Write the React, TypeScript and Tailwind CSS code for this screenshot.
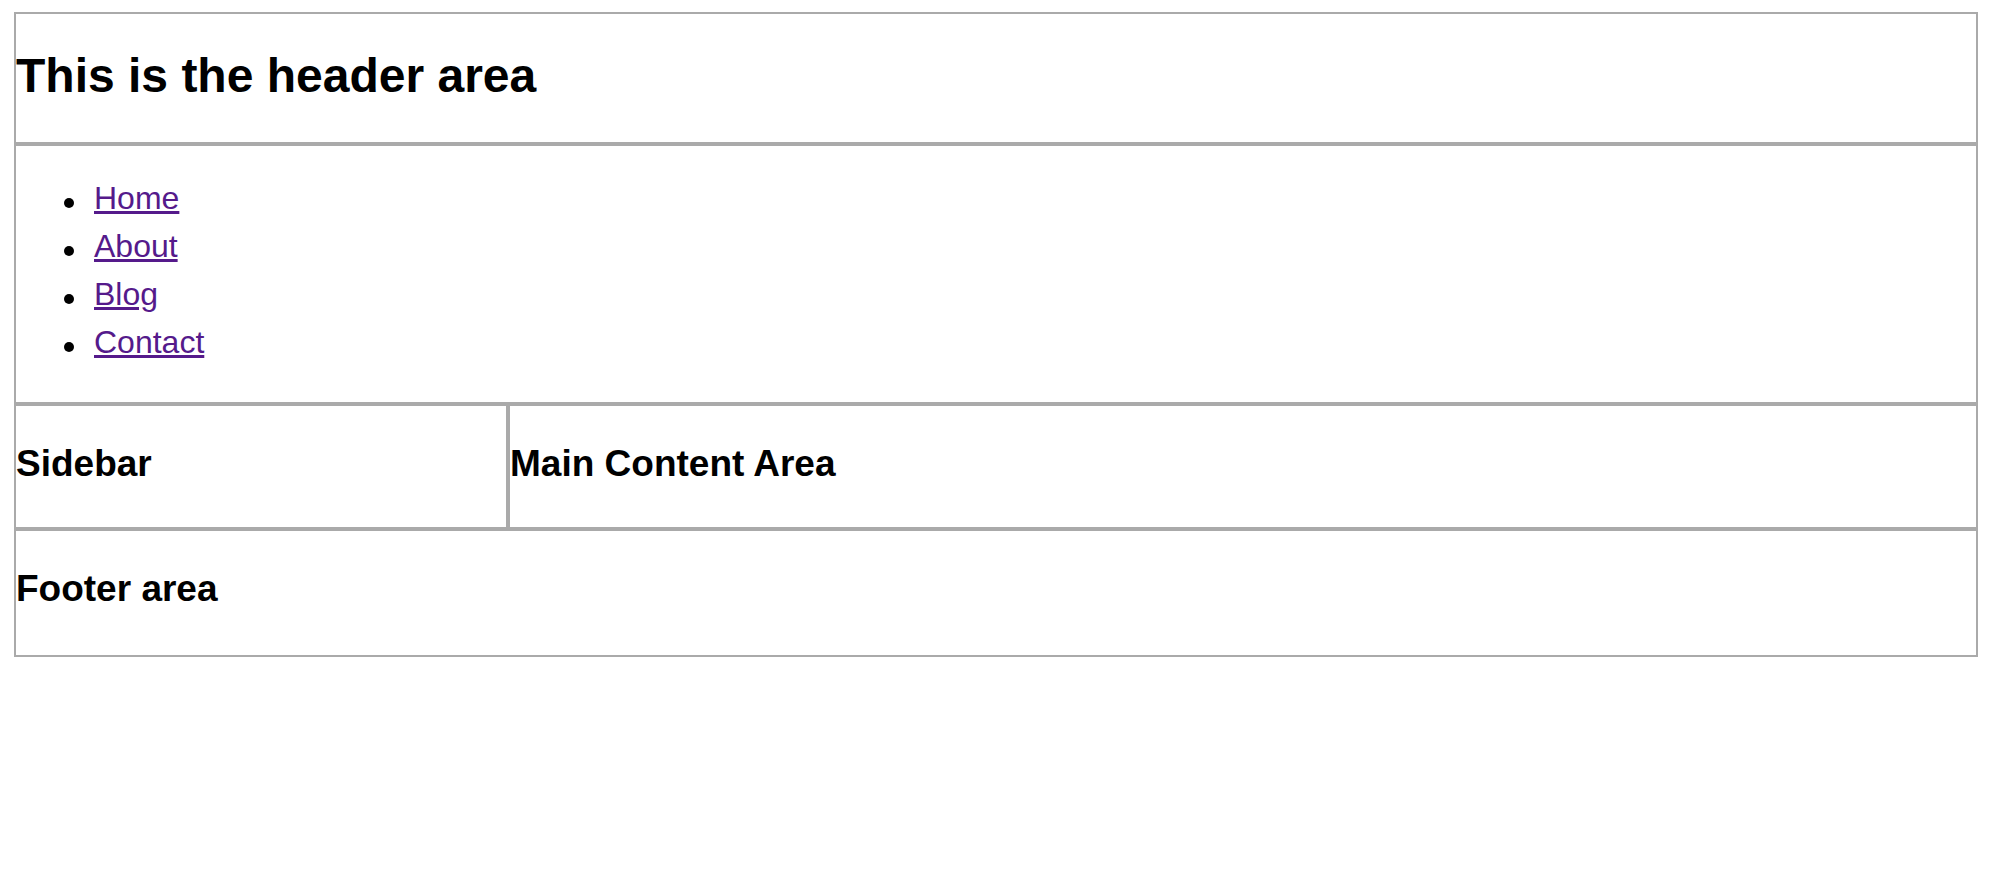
const links = ["Home", "About", "Blog", "Contact"];

export default function App() {
    return (
        <div className="min-h-screen bg-white text-black pt-[12px] pl-[14px]" style={{ fontFamily: '"Liberation Sans", Arial, sans-serif' }}>
            <div className="w-[1964px] flex flex-col">
                <header className="h-[132px] border-2 border-[#aaaaaa] pt-[38px]">
                    <h1 className="text-[48px] leading-[48px] font-bold">This is the header area</h1>
                </header>

                <nav className="h-[260px] border-2 border-[#aaaaaa] pt-[28px]">
                    <ul className="flex flex-col">
                        {links.map((link) => (
                            <li key={link} className="flex items-center h-[48px]">
                                <span className="w-[10px] h-[10px] mt-[10px] ml-[48px] mr-[20px] rounded-full bg-black shrink-0" />
                                <a href="#" className="text-[32px] leading-[48px] text-[#551a8b] underline">
                                    {link}
                                </a>
                            </li>
                        ))}
                    </ul>
                </nav>

                <div className="flex h-[125px]">
                    <aside className="w-[494px] border-2 border-[#aaaaaa] pt-[40px]">
                        <h2 className="text-[37px] leading-[36px] font-bold">Sidebar</h2>
                    </aside>
                    <main className="flex-1 border-2 border-[#aaaaaa] pt-[40px]">
                        <h2 className="text-[37px] leading-[36px] font-bold">Main Content Area</h2>
                    </main>
                </div>

                <footer className="h-[128px] border-2 border-[#aaaaaa] pt-[40px]">
                    <h2 className="text-[37px] leading-[36px] font-bold">Footer area</h2>
                </footer>
            </div>
        </div>
    );
}
